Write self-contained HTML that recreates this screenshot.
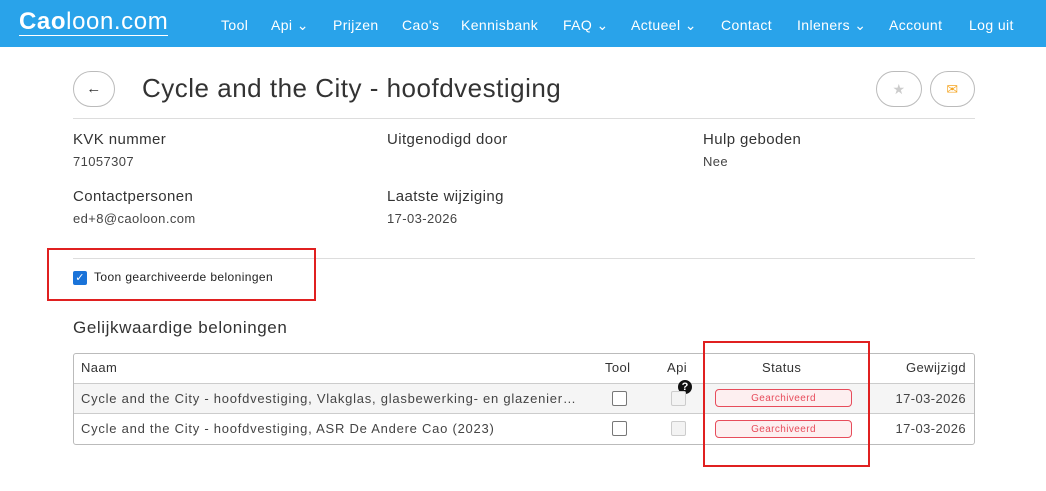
<!DOCTYPE html>
<html><head><style>
*{box-sizing:border-box;margin:0;padding:0}
body{width:1046px;height:491px;background:#fff;font-family:"Liberation Sans",sans-serif;color:#333;position:relative;overflow:hidden;letter-spacing:0.4px}
.nav{position:absolute;left:0;top:0;width:1046px;height:47px;background:#29a3ea}
.logo{position:absolute;left:19px;top:9px;color:#fff;font-size:24px;border-bottom:1px solid #fff;line-height:26px;letter-spacing:0.6px}
.nav a{position:absolute;top:17px;color:#fff;font-size:14px}
.a{position:absolute;white-space:nowrap}
.r{text-align:right}
.lbl{font-size:15px;color:#333}
.val{font-size:13px;color:#444}
.circ{position:absolute;border:1px solid #bbb;border-radius:21px;height:36px}
.cb{position:absolute;width:15px;height:15px;border:1px solid #777;border-radius:2px;background:#fff}
.cbd{border-color:#ccc;background:#f3f3f3}
.badge{position:absolute;left:715px;width:137px;height:18px;border:1px solid #e74c5b;border-radius:4px;background:#fdeff0;color:#e74c5b;font-size:10px;text-align:center;line-height:17px}
.red{position:absolute;border:2px solid #e02020}
</style></head><body>
<div class="nav">
<div class="logo"><b>Cao</b>loon.com</div>
<a style="left:221px">Tool</a><a style="left:271px">Api ⌄</a><a style="left:333px">Prijzen</a><a style="left:402px">Cao's</a><a style="left:461px">Kennisbank</a><a style="left:563px">FAQ ⌄</a><a style="left:631px">Actueel ⌄</a><a style="left:721px">Contact</a><a style="left:797px">Inleners ⌄</a><a style="left:889px">Account</a><a style="left:969px">Log uit</a>
</div>
<div class="circ" style="left:73px;top:71px;width:42px;text-align:center;line-height:34px;font-size:15px">←</div>
<div class="a" style="left:142px;top:73px;font-size:26px;color:#333;letter-spacing:0.5px">Cycle and the City - hoofdvestiging</div>
<div class="circ" style="left:876px;top:71px;width:46px;text-align:center;line-height:34px;color:#ccc;font-size:14px">★</div>
<div class="circ" style="left:930px;top:71px;width:45px;text-align:center;line-height:34px;color:#f5a623;font-size:14px">✉</div>
<div class="a" style="left:73px;top:118px;width:902px;height:1px;background:#ddd"></div>
<div class="a lbl" style="left:73px;top:131px">KVK nummer</div>
<div class="a val" style="left:73px;top:154px">71057307</div>
<div class="a lbl" style="left:387px;top:131px">Uitgenodigd door</div>
<div class="a lbl" style="left:703px;top:131px">Hulp geboden</div>
<div class="a val" style="left:703px;top:154px">Nee</div>
<div class="a lbl" style="left:73px;top:188px">Contactpersonen</div>
<div class="a val" style="left:73px;top:211px">ed+8@caoloon.com</div>
<div class="a lbl" style="left:387px;top:188px">Laatste wijziging</div>
<div class="a val" style="left:387px;top:211px">17-03-2026</div>
<div class="a" style="left:73px;top:258px;width:902px;height:1px;background:#ddd"></div>
<div class="a" style="left:73px;top:271px;width:14px;height:14px;background:#1a73d9;border-radius:2px;color:#fff;font-size:11px;text-align:center;line-height:14px">✓</div>
<div class="a" style="left:94px;top:270px;font-size:12px;color:#222">Toon gearchiveerde beloningen</div>
<div class="red" style="left:47px;top:248px;width:269px;height:53px"></div>
<div class="a" style="left:73px;top:318px;font-size:17px;color:#333;letter-spacing:0.6px">Gelijkwaardige beloningen</div>
<div class="a" style="left:73px;top:353px;width:902px;height:92px;border:1px solid #bbb;border-radius:3px;overflow:hidden">
<div style="position:absolute;left:0;top:29px;width:902px;height:31px;background:#f5f5f5;border-top:1px solid #ccc;border-bottom:1px solid #ccc"></div>
</div>
<div class="a" style="left:81px;top:360px;font-size:13px">Naam</div>
<div class="a" style="left:605px;top:360px;font-size:13px">Tool</div>
<div class="a" style="left:667px;top:360px;font-size:13px">Api</div>
<div class="a" style="left:762px;top:360px;font-size:13px">Status</div>
<div class="a r" style="left:866px;width:100px;top:360px;font-size:13px">Gewijzigd</div>
<div class="a" style="left:678px;top:380px;width:14px;height:14px;border-radius:7px;background:#111;color:#fff;font-size:11px;font-weight:bold;text-align:center;line-height:14px;letter-spacing:0">?</div>
<div class="a" style="left:81px;top:391px;font-size:13px;color:#444;letter-spacing:0.75px">Cycle and the City - hoofdvestiging, Vlakglas, glasbewerking- en glazenier…</div>
<div class="a" style="left:81px;top:421px;font-size:13px;color:#444;letter-spacing:0.75px">Cycle and the City - hoofdvestiging, ASR De Andere Cao (2023)</div>
<div class="cb" style="left:612px;top:391px"></div><div class="cb cbd" style="left:671px;top:391px"></div>
<div class="cb" style="left:612px;top:421px"></div><div class="cb cbd" style="left:671px;top:421px"></div>
<div class="badge" style="top:389px">Gearchiveerd</div>
<div class="badge" style="top:420px">Gearchiveerd</div>
<div class="a r" style="left:866px;width:100px;top:391px;font-size:13px;color:#444">17-03-2026</div>
<div class="a r" style="left:866px;width:100px;top:421px;font-size:13px;color:#444">17-03-2026</div>
<div class="red" style="left:703px;top:341px;width:167px;height:126px"></div>
</body></html>
